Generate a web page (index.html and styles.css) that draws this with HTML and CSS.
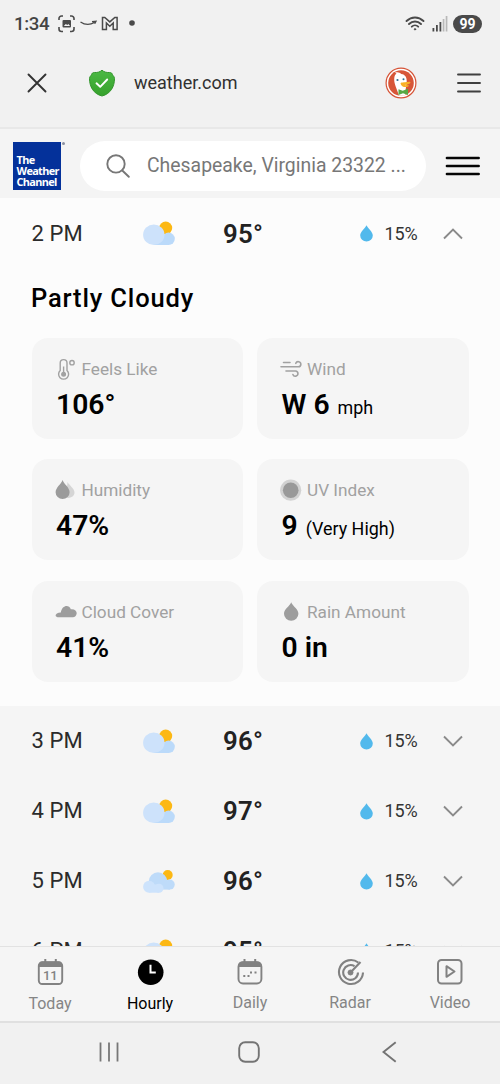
FILE: index.html
```html
<!DOCTYPE html>
<html lang="en">
<head>
<meta charset="utf-8">
<title>Hourly Weather</title>
<link rel="stylesheet" href="styles.css">
</head>
<body>
<svg class="defs" width="0" height="0">
  <defs>
    <g id="sun-cloud">
      <circle cx="22.700" cy="7" r="6.500" fill="#fcb814"/>
      <circle cx="25.600" cy="17.800" r="6.200" fill="#bbdafa"/>
      <rect x="11" y="14" width="15" height="10" fill="#bbdafa"/>
      <ellipse cx="10.800" cy="13.700" rx="10.700" ry="10.300" fill="#cde2fb"/>
    </g>
    <g id="clouds-sun">
      <circle cx="24.700" cy="6" r="5" fill="#fcb814"/>
      <circle cx="15" cy="12.500" r="9.200" fill="#bedbf9"/>
      <circle cx="26.700" cy="15.600" r="5" fill="#bedbf9"/>
      <rect x="15" y="12" width="12" height="8.600" fill="#bedbf9"/>
      <circle cx="6.100" cy="17.700" r="6" fill="#cde3fc"/>
      <circle cx="16" cy="19.200" r="4.500" fill="#cde3fc"/>
      <rect x="6" y="15.500" width="10" height="8.200" fill="#cde3fc"/>
    </g>
    <path id="drop" d="M6.500.3C5.400 3 .2 6.600.2 10.600a6.300 5.900 0 0 0 12.600 0C12.800 6.600 7.600 3 6.500.3Z"/>
  </defs>
</svg>
<div class="phone">
  <header class="status">
    <span class="clock">1:34</span>
    <svg class="notif" width="82" height="18" viewBox="0 0 82 18" fill="none" stroke="#4a4a4a" stroke-width="1.600">
      <path d="M1 5V3.500A2.500 2.500 0 0 1 3.500 1H5M12 1h1.500A2.500 2.500 0 0 1 16 3.500V5M16 12v2a2.500 2.500 0 0 1-2.500 2.500H12M5 16.500H3.500A2.500 2.500 0 0 1 1 14v-2"/>
      <rect x="4.500" y="5" width="8.500" height="7.500" rx="1" fill="#4a4a4a" stroke="none"/>
      <path d="m5.800 11 2-2 1.500 1 1-1 1.800 2Z" fill="#f1f1f1" stroke="none"/>
      <path d="M22.500 7c4.500 3 9.500 3 14 .5M34 6.700l4-.4-1.300 2.500" stroke-width="1.300"/>
      <path d="M44.500 2.500h2.300l5 4.400 5-4.400h2.300v12h-3.900V8l-3.400 3.200L48.400 8v6.500h-3.900Z" stroke-width="1.500"/>
      <circle cx="74" cy="8" r="2.800" fill="#4a4a4a" stroke="none"/>
    </svg>
    <span class="spacer"></span>
    <svg class="wifi" width="20" height="15" viewBox="0 0 20 15" fill="none" stroke="#4a4a4a" stroke-width="1.900" stroke-linecap="round">
      <path d="M1.500 5c5-4.700 12-4.700 17 0M4 8c3.500-3.400 8.500-3.400 12 0M6.800 10.700c1.800-1.800 4.600-1.800 6.400 0"/>
      <circle cx="10" cy="13.300" r=".7" fill="#4a4a4a" stroke-width="1"/>
    </svg>
    <svg class="signal" width="16" height="16" viewBox="0 0 16 16">
      <path d="M.5 12h1.800v3.500H.5zM4 9h1.800v6.500H4zM7.500 6h1.800v9.500H7.500z" fill="#4a4a4a"/>
      <path d="M10.700 3h1.700v12.500h-1.700zM13.700 0h1.700v15.500h-1.700z" fill="#b8b8b8"/>
    </svg>
    <span class="battery">99</span>
  </header>

  <div class="browser">
    <svg width="20" height="20" viewBox="0 0 20 20" stroke="#333" stroke-width="1.900" stroke-linecap="round"><path d="m1.500 1.500 17 17M18.500 1.500l-17 17"/></svg>
    <svg class="shield" width="28" height="28" viewBox="0 0 28 28">
      <defs><linearGradient id="green" x1="0" y1="0" x2="0" y2="1"><stop offset="0" stop-color="#4bb944"/><stop offset="1" stop-color="#36a12c"/></linearGradient></defs>
      <path d="M14 1.200c2 1.800 4.500 2.500 7.500 2.300 2 0 2.500.8 3 2.200.5 1.200 2 1.800 2 3.800 0 8-3.800 15.300-12.500 17.500C5.300 24.800 1.500 17.500 1.500 9.500c0-2 1.500-2.600 2-3.800.5-1.400 1-2.200 3-2.200C9.500 3.700 12 3 14 1.200Z" fill="url(#green)" stroke="#31952b" stroke-width="1"/>
      <path d="m8.500 14.300 3.700 3.500 7-7.300" fill="none" stroke="#fff" stroke-width="1.900" stroke-linecap="round" stroke-linejoin="round"/>
    </svg>
    <span class="url">weather.com</span>
    <svg class="duck" width="32" height="32" viewBox="0 0 32 32">
      <circle cx="16" cy="16" r="15.500" fill="#d65336"/><circle cx="16" cy="16" r="14.300" fill="#fff"/><circle cx="16" cy="16" r="12.800" fill="#d75638"/>
      <path d="M14 28.500C12 22 9 17 9.200 12c.1-3.300 1.200-4.700 2.300-5.200L10 5.500c3-.8 5 .1 6.200 1.500 4.300.5 5.800 3.800 5.500 8-.2 4-1.200 5-1.200 13.200-2 .7-4.400.8-6.500.3Z" fill="#fff"/>
      <path d="M15.500 16.200c1-1.200 5-.8 8.700-1.500 2-.3 1.500 1.600-.4 2.400-1.500.7-3.500.6-3.500 1.100 1.200.3 4-.5 3.400.7-1.200 1.700-7.500 2-8.200-2.700Z" fill="#f9b127"/>
      <path d="m13.500 22.200 4.200 1.500 5.300-2v6.200l-5-1.600-4.500 1.600Z" fill="#58a844"/>
      <circle cx="12.500" cy="13" r="1.100" fill="#2b6c8e"/><circle cx="18.500" cy="12.200" r="1" fill="#2b6c8e"/>
    </svg>
    <svg width="24" height="20" viewBox="0 0 24 20" stroke="#3f3f3f" stroke-width="1.900" stroke-linecap="round"><path d="M1 1.500h22M1 10h22M1 18.500h22"/></svg>
  </div>

  <div class="site-head">
    <div class="logo">The<br>Weather<br>Channel<span class="mark"></span></div>
    <div class="search">
      <svg width="24" height="24" viewBox="0 0 24 24" fill="none" stroke="#777" stroke-width="1.900" stroke-linecap="round"><circle cx="10" cy="9.900" r="8.700"/><path d="m16.300 16.500 6.500 6.300"/></svg>
      <span>Chesapeake, Virginia 23322 ...</span>
    </div>
    <svg class="menu" width="35" height="20" viewBox="0 0 35 20" stroke="#050505" stroke-width="2.700" stroke-linecap="round"><path d="M2 2h31.600M2 10h31.600M2 18h31.600"/></svg>
  </div>

  <main class="hours">
    <section class="open">
      <div class="row">
        <span class="time">2 PM</span><svg class="sky" width="32" height="25"><use href="#sun-cloud"/></svg><span class="temp">95°</span>
        <svg class="drop" width="13" height="17"><use href="#drop"/></svg><span class="chance">15%</span>
        <svg class="chev up" width="20" height="12" viewBox="0 0 20 12"><path d="m1 1.500 9 9 9-9"/></svg>
      </div>
      <h2>Partly Cloudy</h2>
      <div class="cards">
        <article>
          <div class="label"><svg width="22" height="22" viewBox="0 0 22 22" fill="none" stroke="#a1a1a1" stroke-width="1.400"><path d="M5.200 12.500V5A3.400 3.400 0 0 1 12 5v7.500a5 5 0 1 1-6.800 0Z"/><circle cx="17" cy="4.700" r="2.200"/><path d="M8.600 8.500v7"/><circle cx="8.600" cy="16.200" r="1.800" fill="#a1a1a1"/></svg><span>Feels Like</span></div>
          <p>106°</p>
        </article>
        <article>
          <div class="label"><svg width="22" height="22" viewBox="0 0 22 22" fill="none" stroke="#a1a1a1" stroke-width="1.600" stroke-linecap="round"><path d="M3.500 4.500h6.500M1 8.800h17.500a2.600 2.600 0 1 0-2.700-3.500M6 13h9.500a2.600 2.600 0 1 1-2.600 3.500"/></svg><span>Wind</span></div>
          <p>W 6 <small>mph</small></p>
        </article>
        <article>
          <div class="label"><svg width="22" height="22" viewBox="0 0 22 22"><path d="M12.500 3c1.500 3 7 6.500 7 10.500 0 4-5 6.500-8.500 5Z" fill="#d5d5d5"/><path d="M7.600 1C6.300 5 .6 8.500.6 13.300a7 6.700 0 0 0 14 0C14.600 8.500 8.800 5 7.600 1Z" fill="#9b9b9b"/></svg><span>Humidity</span></div>
          <p>47%</p>
        </article>
        <article>
          <div class="label"><svg width="22" height="22" viewBox="0 0 22 22"><circle cx="10.700" cy="11.200" r="10.600" fill="#d2d2d2"/><circle cx="10.700" cy="11.200" r="7.800" fill="#999"/></svg><span>UV Index</span></div>
          <p>9 <small>(Very High)</small></p>
        </article>
        <article>
          <div class="label"><svg width="22" height="22" viewBox="0 0 22 22"><path d="M2.500 16.200c-3.500-.5-2-4.500 3.300-4.600C7 3.800 14 3.200 15.800 8.200c4.500-.5 6.500 2.500 5.700 5-.5 2-2 3-3.500 3Z" fill="#9d9d9d"/></svg><span>Cloud Cover</span></div>
          <p>41%</p>
        </article>
        <article>
          <div class="label"><svg width="22" height="22" viewBox="0 0 22 22"><path d="M11.200 1.300c-1.500 4-7.200 6.800-7.200 11.500a7.200 7 0 0 0 14.400 0c0-4.700-5.700-7.500-7.200-11.500Z" fill="#9d9d9d"/></svg><span>Rain Amount</span></div>
          <p>0 in</p>
        </article>
      </div>
    </section>
    <div class="row">
      <span class="time">3 PM</span><svg class="sky" width="32" height="25"><use href="#sun-cloud"/></svg><span class="temp">96°</span>
      <svg class="drop" width="13" height="17"><use href="#drop"/></svg><span class="chance">15%</span>
      <svg class="chev" width="20" height="12" viewBox="0 0 20 12"><path d="m1 1.500 9 9 9-9"/></svg>
    </div>
    <div class="row">
      <span class="time">4 PM</span><svg class="sky" width="32" height="25"><use href="#sun-cloud"/></svg><span class="temp">97°</span>
      <svg class="drop" width="13" height="17"><use href="#drop"/></svg><span class="chance">15%</span>
      <svg class="chev" width="20" height="12" viewBox="0 0 20 12"><path d="m1 1.500 9 9 9-9"/></svg>
    </div>
    <div class="row">
      <span class="time">5 PM</span><svg class="sky" width="32" height="25"><use href="#clouds-sun"/></svg><span class="temp">96°</span>
      <svg class="drop" width="13" height="17"><use href="#drop"/></svg><span class="chance">15%</span>
      <svg class="chev" width="20" height="12" viewBox="0 0 20 12"><path d="m1 1.500 9 9 9-9"/></svg>
    </div>
    <div class="row">
      <span class="time">6 PM</span><svg class="sky" width="32" height="25"><use href="#sun-cloud"/></svg><span class="temp">95°</span>
      <svg class="drop" width="13" height="17"><use href="#drop"/></svg><span class="chance">15%</span>
      <svg class="chev" width="20" height="12" viewBox="0 0 20 12"><path d="m1 1.500 9 9 9-9"/></svg>
    </div>
  </main>

  <nav class="tabs">
    <a class="low"><svg width="28" height="28" viewBox="0 0 28 28"><rect x="2.800" y="4.300" width="23.400" height="21.700" rx="3.500" fill="none" stroke="#828282" stroke-width="1.900"/><path d="M2.500 9V7a4 4 0 0 1 4-3.500h16a4 4 0 0 1 4 3.500v2Z" fill="#828282"/><path d="M9.300 1v4M19.800 1v4" stroke="#828282" stroke-width="2"/><text x="14.200" y="21.800" text-anchor="middle" class="day">11</text></svg><span>Today</span></a>
    <a class="active low"><svg width="28" height="28" viewBox="0 0 28 28"><circle cx="14.700" cy="14.300" r="12.800" fill="#000"/><path d="M14.500 6.800v7.600h5.300" fill="none" stroke="#fff" stroke-width="2"/></svg><span>Hourly</span></a>
    <a><svg width="28" height="28" viewBox="0 0 28 28"><rect x="2.500" y="4.300" width="22.900" height="21.200" rx="4.500" fill="none" stroke="#828282" stroke-width="1.900"/><path d="M2.200 9V7a4 4 0 0 1 4-3.500h15.500a4 4 0 0 1 4 3.500v2Z" fill="#828282"/><path d="M8.500 1v4M19.200 1v4" stroke="#828282" stroke-width="2"/><path d="M7.300 18h2M11.500 18h2M14 14.500h2M18.500 14.500h2" stroke="#828282" stroke-width="2"/></svg><span>Daily</span></a>
    <a><svg width="28" height="28" viewBox="0 0 28 28" fill="none" stroke="#828282" stroke-width="2.100"><path d="M22.300 4.500A12 12 0 1 0 27 14.500M18.500 8.200A7.400 7.400 0 1 0 22 14.500M14.500 14.500 24.500 4"/><circle cx="14.500" cy="14.500" r="2.500" fill="#828282" stroke-width="1"/></svg><span>Radar</span></a>
    <a><svg width="28" height="28" viewBox="0 0 28 28" fill="none" stroke="#828282" stroke-width="2" stroke-linejoin="round"><rect x="2" y="2" width="23.500" height="23.500" rx="3.500"/><path d="M10.500 8.200v10.600l8-5.300Z"/></svg><span>Video</span></a>
  </nav>

  <footer class="system">
    <svg width="20" height="20" viewBox="0 0 20 20" stroke="#777" stroke-width="1.800"><path d="M1.500.5v19M10 .5v19M18.500.5v19"/></svg>
    <svg width="22" height="22" viewBox="0 0 22 22" fill="none" stroke="#747474" stroke-width="1.900"><rect x="1.200" y="1.200" width="19.600" height="19.600" rx="6"/></svg>
    <svg width="15" height="22" viewBox="0 0 15 22" fill="none" stroke="#747474" stroke-width="1.900"><path d="M13.700 1.200 1.500 11l12.200 9.800"/></svg>
  </footer>
</div>
</body>
</html>
```
FILE: styles.css
```css
* { box-sizing: border-box; }
body { margin: 0; font-family: Roboto, "Liberation Sans", sans-serif; color: #2b2b2b; }
svg { display: block; flex: none; }
.defs { position: absolute; }
.phone { width: 500px; height: 1084px; display: flex; flex-direction: column; overflow: hidden; background: #f1f1f1; }
.status { height: 46px; display: flex; align-items: center; padding: 1px 18px 0 14px; flex: none; }
.clock { font-size: 18.700px; font-weight: 500; color: #444; width: 43.500px; letter-spacing: -.35px; }
.notif { margin-top: 1px; }
.spacer { flex: 1; }
.wifi { margin-right: 7px; }
.signal { margin-right: 5px; }
.battery { width: 29px; height: 18px; border-radius: 9px; background: #4a4a4a; color: #fff; font-size: 14px; font-weight: 700; line-height: 18px; text-align: center; }
.browser { height: 83px; flex: none; display: flex; align-items: center; padding: 0 19px 7px 27px; border-bottom: 2px solid #e8e8e8; }
.shield { margin-left: 41px; }
.url { margin-left: 18px; font-size: 18px; color: #303030; flex: 1; line-height: 24px; }
.duck { margin-right: 40px; }
.site-head { height: 69px; flex: none; display: flex; align-items: center; padding: 5px 19px 0 13px; background: #f4f4f4; }
.logo { position: relative; width: 48px; height: 48px; background: #04319a; color: #fff; font: 700 10.900px/11px "Open Sans", sans-serif; letter-spacing: -.65px; padding: 12px 0 0 3.500px; }
.mark { position: absolute; left: 49px; top: 0; width: 3px; height: 3px; border-radius: 50%; background: #898fa0; }
.search { width: 346px; height: 50px; margin: 0 19px 0 19px; padding: 0 0 1px 26px; border-radius: 25px; background: #fff; display: flex; align-items: center; gap: 17px; color: #777; font-size: 19.400px; white-space: nowrap; }
.hours { flex: 1; min-height: 0; overflow: hidden; background: #f5f5f5; }
.open { height: 508px; background: #fcfcfc; }
.open .row { padding-top: 1px; }
.row { height: 70px; padding: 0 36px 0 31.500px; display: grid; grid-template-columns: 111.500px 80px 137px 24.500px 58.500px 20px; align-items: center; line-height: 30px; }
.time { font-size: 22px; letter-spacing: .1px; }
.temp { font-size: 25.800px; font-weight: 600; letter-spacing: .3px; color: #222; }
.drop { fill: #52b9ec; }
.chance { font-size: 18px; letter-spacing: -.1px; color: #333; }
.chev { fill: none; stroke: #8a8a8a; stroke-width: 1.900; }
.up { transform: scaleY(-1); }
h2 { margin: 0; padding: 15px 31px 0; height: 70px; font-size: 25.500px; line-height: 30px; font-weight: 500; letter-spacing: .85px; color: #000; }
.cards { display: grid; grid-template-columns: 211.500px 212px; grid-auto-rows: 101px; gap: 20.300px 14px; padding: 0 31px 0 31.500px; }
article { background: #f5f5f5; border-radius: 16px; padding: 20px 0 0 23px; }
.label { display: flex; gap: 5px; align-items: center; height: 22px; font-size: 17.200px; line-height: 22px; color: #a1a1a1; }
.cards p { margin: 9px 0 0 1.500px; font-size: 28.300px; line-height: 32px; font-weight: 600; color: #000; white-space: nowrap; }
.cards small { font-size: 17.900px; font-weight: 400; margin-left: 1px; }
.tabs { height: 75px; flex: none; display: grid; grid-template-columns: repeat(5, 1fr); background: #f5f5f5; border-top: 1px solid #e2e2e2; color: #858585; }
.tabs a { display: flex; flex-direction: column; align-items: center; padding-top: 11px; font-size: 16px; line-height: 20px; gap: 7px; }
.tabs .low { gap: 8px; }
.tabs .active { color: #000; }
.day { font: 500 13px Roboto, sans-serif; fill: #828282; letter-spacing: -.3px; }
.system { height: 63px; flex: none; border-top: 2px solid #e0e0e0; display: flex; align-items: center; padding: 0 0 3px 99px; gap: 118.500px; }
.system svg:last-child { margin-left: 4px; }
```
